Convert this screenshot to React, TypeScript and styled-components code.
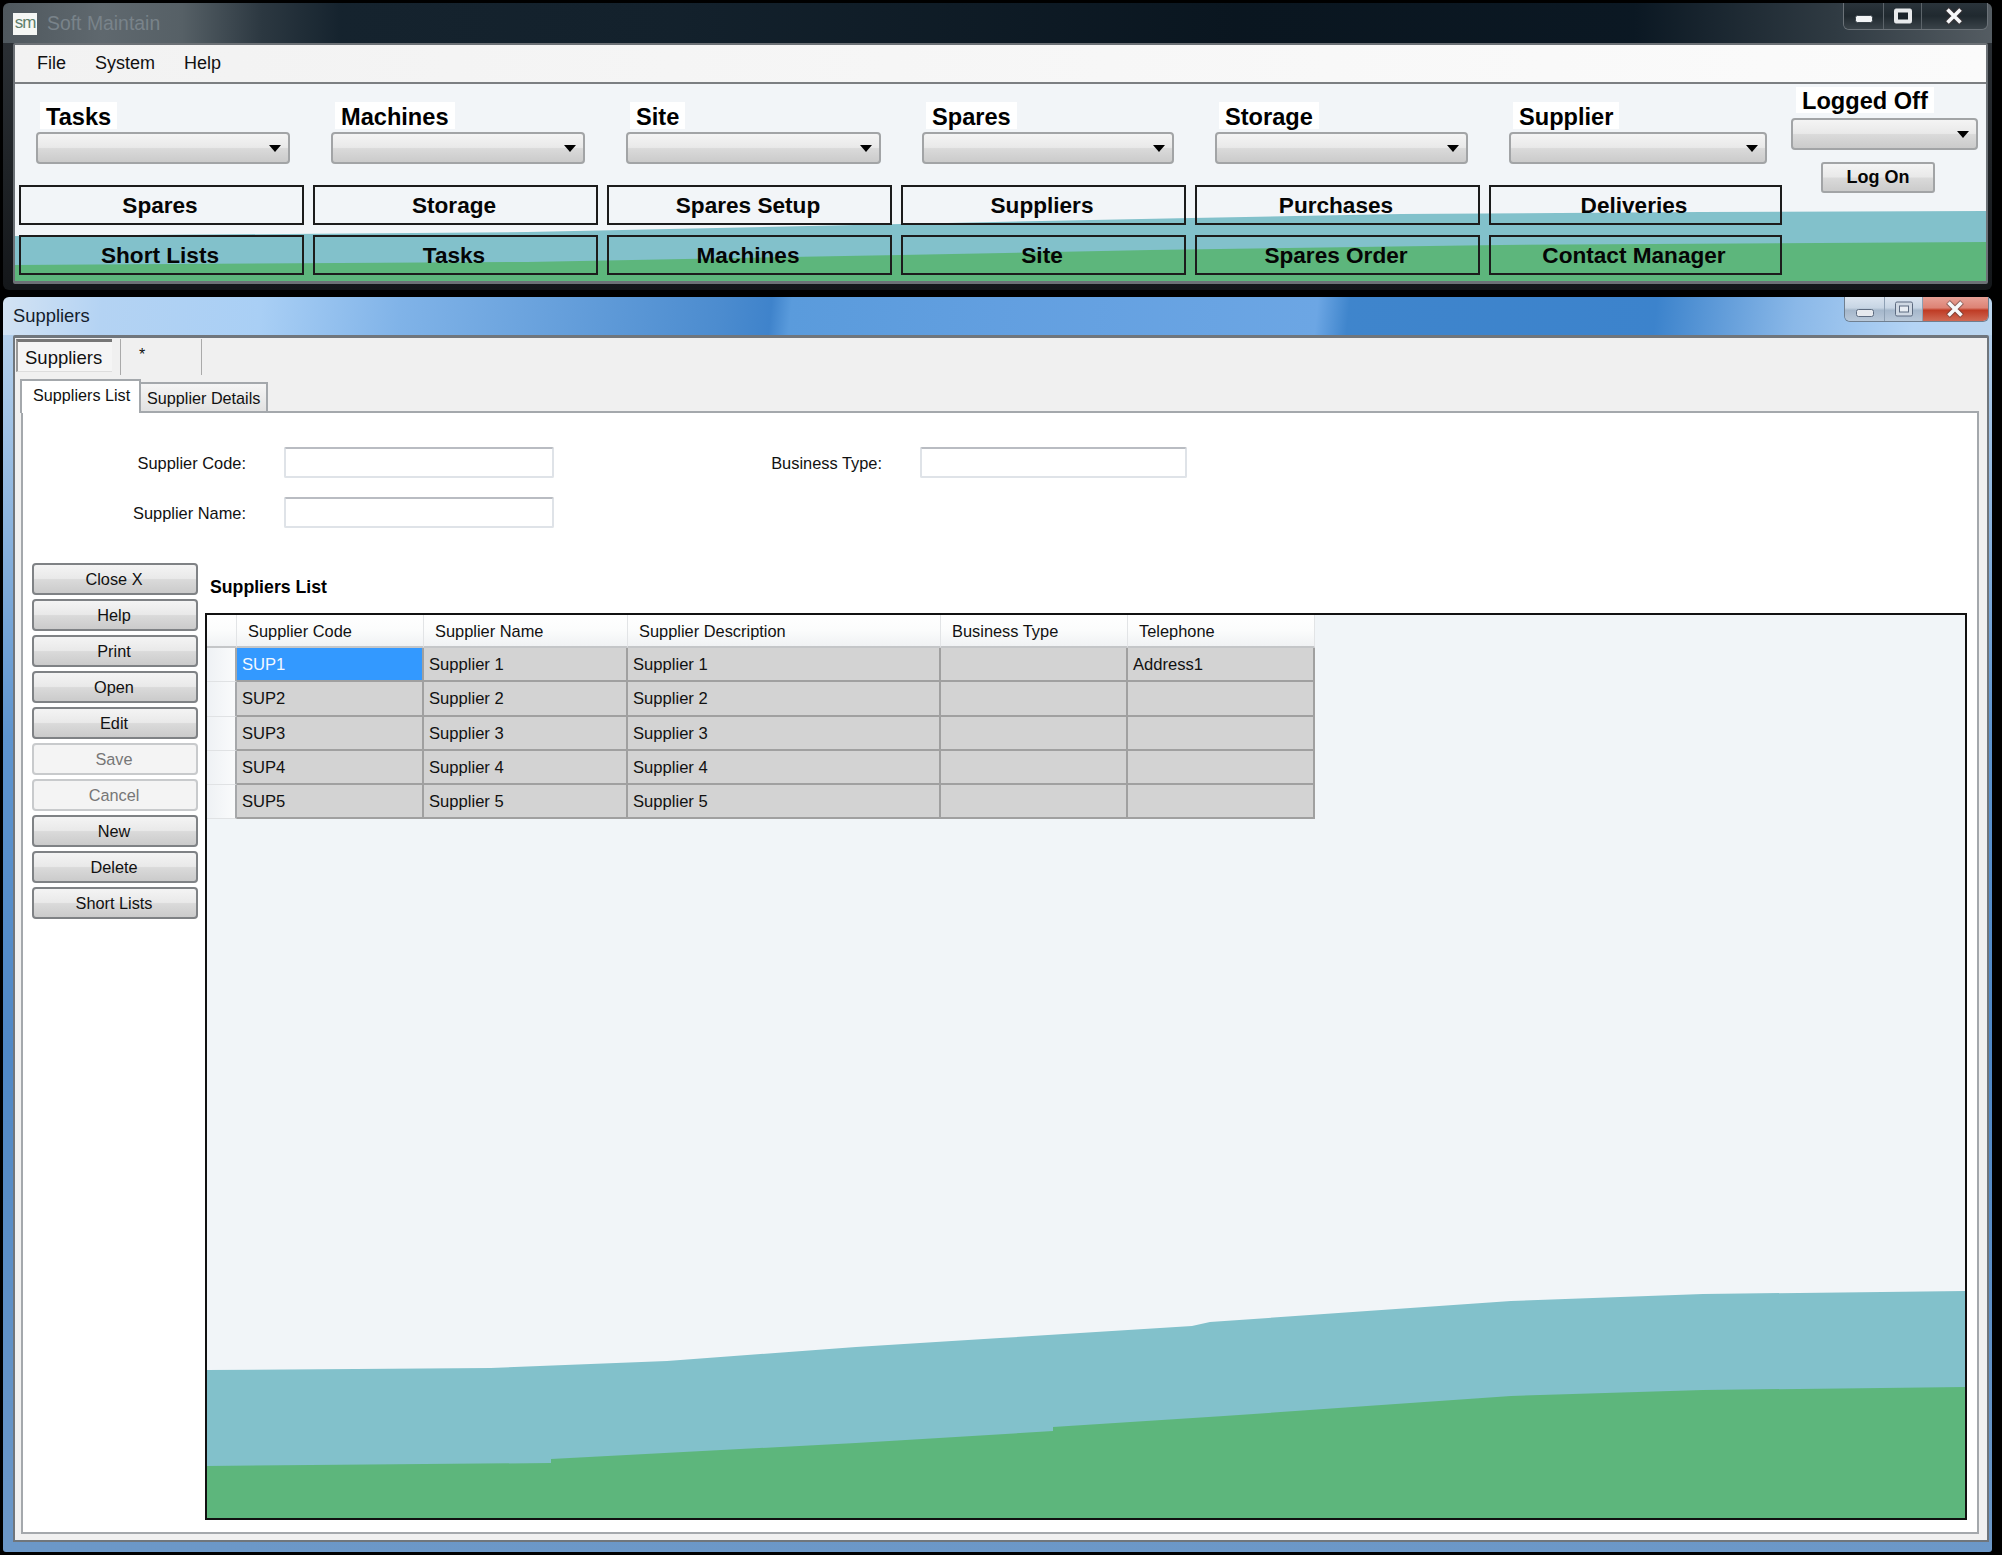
import * as React from 'react';
import styled, { createGlobalStyle } from 'styled-components';

const GlobalStyle = createGlobalStyle`
  html, body {
    margin: 0;
    width: 2002px;
    height: 1555px;
    overflow: hidden;
    background: #000;
    font-family: "Liberation Sans", Arial, sans-serif;
  }
  * { box-sizing: border-box; }
`;

const Desktop = styled.div`
  width: 2002px;
  height: 1555px;
  padding: 3px 0 0 3px;
  display: flex;
  flex-direction: column;
  background: #000;
`;

const DarkFrame = styled.div`
  width: 1989px;
  height: 287px;
  padding: 0 4px 6px 10px;
  border-radius: 6px;
  display: flex;
  flex-direction: column;
  background:
    linear-gradient(180deg, transparent 0 40px, #2a2f34 40px, #14171a 100%),
    linear-gradient(90deg, #4f585e 0, #5f686e 5%, #566066 9%, #2c3841 13%, #15232e 17%, #13212c 34%, #0a1620 62%, #0b1823 82%, #2f3a42 92%, #545c62 100%);
`;

const GlassFrame = styled.div`
  width: 1989px;
  height: 1255px;
  margin-top: 7px;
  padding: 0 3px 10px 10px;
  border-radius: 6px 6px 3px 3px;
  display: flex;
  flex-direction: column;
  background:
    linear-gradient(96deg, #d3e3f3 0, #b4d3f3 5%, #a9cff5 13%, #80b3e8 20%, #4c8ccf 36%, #3f83cb 38.6%, #5a9bdc 39.6%, #629fe0 50%, #6ca6e4 66%, #3f85cc 67.6%, #3c83cc 83%, #8ab8e8 90%, #b4d4f5 96%, #bcd6ee 100%) 0 0 / 100% 38px no-repeat,
    linear-gradient(180deg, #bcd5ee 0, #5d94cf 35%, #4f88c6 60%, #6c98c8 100%);
`;

const TitleBar = styled.div<{ $height: number }>`
  height: ${props => props.$height}px;
  flex: none;
  display: flex;
  justify-content: space-between;
  align-items: flex-start;
`;

const Brand = styled.div`
  display: flex;
  align-items: center;
  gap: 10px;
  padding-top: 9px;
`;

const AppIcon = styled.div`
  width: 24px;
  height: 22px;
  background: #f5f7f5;
  color: #5f7f6c;
  font-size: 17px;
  letter-spacing: -1px;
  line-height: 20px;
  text-align: center;
`;

const DarkTitle = styled.div`
  color: #79838a;
  font-size: 19.4px;
`;

const GlassTitle = styled.div`
  color: #14202c;
  font-size: 18.4px;
  padding-top: 8px;
`;

const WinControls = styled.div<{ $glass?: boolean }>`
  width: 145px;
  height: ${props => (props.$glass ? 25 : 27)}px;
  display: flex;
  border: 1px solid ${props => (props.$glass ? '#6f7f90' : '#6b7278')};
  border-top: none;
  border-radius: 0 0 6px 6px;
  overflow: hidden;
`;

const WinButton = styled.div<{ $w: number; $variant: 'dark' | 'glass' | 'close' }>`
  width: ${props => props.$w}px;
  display: flex;
  align-items: center;
  justify-content: center;
  border-right: 1px solid ${props => (props.$variant === 'dark' ? '#5c646a' : '#8ea0b4')};
  background: ${props =>
    props.$variant === 'close'
      ? 'linear-gradient(180deg, #e8a196 0, #dd8375 45%, #bf3b24 55%, #cf6a55 100%)'
      : props.$variant === 'glass'
        ? 'linear-gradient(180deg, #dbe5f0 0, #c7d5e4 45%, #a5b7cb 55%, #b9c8d9 100%)'
        : 'linear-gradient(180deg, #2a343b 0, #20292f 50%, #3a4349 100%)'};
  &:last-child { border-right: none; }
`;

const Client = styled.div`
  flex: 1;
  min-height: 0;
  display: flex;
  flex-direction: column;
  border: 2px solid #6c7176;
  border-bottom-width: 3px;
  border-radius: 2px;
`;

const MenuBar = styled.div`
  height: 39px;
  flex: none;
  display: flex;
  align-items: center;
  padding-left: 22px;
  background: linear-gradient(90deg, #f2f2f2 0, #fbfbfb 100%);
  border-bottom: 2px solid #7c7f82;
`;

const MenuItem = styled.div<{ $w: number }>`
  width: ${props => props.$w}px;
  color: #111;
  font-size: 18px;
`;

const ControlPanel = styled.div`
  position: relative;
  flex: 1;
  display: flex;
  background: #f2f5f8;
  overflow: hidden;
`;

const WaveArt = styled.svg`
  position: absolute;
  inset: 0;
  width: 100%;
  height: 100%;
`;

const PanelMain = styled.div`
  position: relative;
  width: 1776px;
  padding: 18px 0 0 4px;
`;

const ComboRow = styled.div`
  display: flex;
  gap: 41px;
  margin-left: 17px;
`;

const ComboGroup = styled.div<{ $w: number }>`
  width: ${props => props.$w}px;
`;

const ComboLabel = styled.div`
  display: inline-block;
  height: 27px;
  margin-left: 4px;
  padding: 0 6px;
  background: #fff;
  color: #000;
  font-size: 23.6px;
  font-weight: bold;
  line-height: 30px;
`;

const Combo = styled.div`
  height: 32px;
  margin-top: 3px;
  display: flex;
  align-items: center;
  justify-content: flex-end;
  padding-right: 7px;
  border: 2px solid #a2a4a6;
  border-radius: 4px;
  background: linear-gradient(180deg, #f4f4f4 0, #e9e9e9 48%, #dadada 52%, #cbcbcb 100%);
`;

const ComboArrow = styled.div`
  width: 0;
  height: 0;
  border-left: 6px solid transparent;
  border-right: 6px solid transparent;
  border-top: 7px solid #000;
`;

const NavGrid = styled.div`
  display: grid;
  grid-template-columns: repeat(5, 285px) 293px;
  grid-auto-rows: 40px;
  column-gap: 9px;
  row-gap: 10px;
  margin-top: 21px;
`;

const NavButton = styled.button`
  padding: 1px 3px 0 0;
  border: 2px solid #1c1c1c;
  background: transparent;
  color: #050505;
  font-family: inherit;
  font-size: 22.6px;
  font-weight: bold;
`;

const SessionColumn = styled.div`
  position: relative;
  width: 187px;
  padding-top: 3px;
`;

const SessionLabel = styled(ComboLabel)`
  height: 26px;
  margin-left: 5px;
  line-height: 29px;
`;

const SessionCombo = styled(Combo)`
  margin-top: 5px;
`;

const LogOnButton = styled.button`
  display: block;
  width: 114px;
  height: 31px;
  margin: 12px 0 0 30px;
  padding: 0;
  border: 2px solid #a2a4a6;
  border-radius: 3px;
  background: linear-gradient(180deg, #f4f4f4 0, #e9e9e9 48%, #dadada 52%, #cbcbcb 100%);
  color: #050505;
  font-family: inherit;
  font-size: 18px;
  font-weight: bold;
`;

const DocClient = styled.div`
  flex: 1;
  min-height: 0;
  display: flex;
  flex-direction: column;
  padding: 1px 8px 6px 6px;
  background: #f0f0f0;
  border: 2px solid #70767c;
  border-top-width: 3px;
  border-radius: 2px 2px 0 0;
`;

const OuterTabs = styled.div`
  height: 36px;
  flex: none;
  display: flex;
  margin-left: -5px;
`;

const OuterTab = styled.div`
  width: 96px;
  height: 33px;
  margin-right: 8px;
  padding-left: 7px;
  background: #f5f5f5;
  border-top: 3px solid #777;
  border-left: 2px solid #999;
  border-bottom: 1px solid #ddd;
  color: #111;
  font-size: 18.5px;
  line-height: 31px;
`;

const NewTab = styled.div`
  width: 82px;
  padding: 7px 0 0 18px;
  border-left: 1px solid #aaa;
  border-right: 1px solid #aaa;
  color: #111;
  font-size: 16px;
`;

const InnerTabs = styled.div`
  height: 32px;
  margin-top: 4px;
  flex: none;
  display: flex;
  align-items: flex-end;
`;

const InnerTab = styled.div<{ $active?: boolean }>`
  position: relative;
  width: ${props => (props.$active ? 121 : 127)}px;
  height: ${props => (props.$active ? 34 : 29)}px;
  margin-left: ${props => (props.$active ? -1 : 0)}px;
  margin-bottom: ${props => (props.$active ? -2 : 0)}px;
  padding-left: ${props => (props.$active ? 11 : 6)}px;
  border: 2px solid #a4a8ac;
  border-left-width: ${props => (props.$active ? 2 : 0)}px;
  border-bottom: none;
  background: ${props => (props.$active ? '#fff' : 'linear-gradient(180deg, #f5f5f5 0, #e2e2e2 100%)')};
  color: #111;
  font-size: 16.2px;
  line-height: ${props => (props.$active ? 28 : 29)}px;
`;

const TabPage = styled.div`
  flex: 1;
  min-height: 0;
  display: flex;
  flex-direction: column;
  padding-top: 34px;
  background: #fff;
  border: 2px solid #a4a8ac;
`;

const FilterForm = styled.div`
  flex: none;
  display: grid;
  grid-template-columns: 223px 270px 290px 267px;
  column-gap: 38px;
  row-gap: 19px;
  grid-auto-rows: 31px;
  align-items: center;
`;

const FieldLabel = styled.div`
  padding-top: 1px;
  color: #111;
  font-size: 16.4px;
  text-align: right;
`;

const FieldInput = styled.input`
  height: 31px;
  width: 100%;
  padding: 0;
  background: #fff;
  border: 2px solid #dfe3e8;
  border-top-color: #b9bcc2;
  border-radius: 2px;
`;

const PageBody = styled.div`
  flex: 1;
  min-height: 0;
  display: flex;
  margin: 35px 0 12px 9px;
`;

const ActionColumn = styled.div`
  width: 166px;
  flex: none;
  display: flex;
  flex-direction: column;
  gap: 4px;
`;

const ActionButton = styled.button`
  height: 32px;
  padding: 0 2px 0 0;
  border: 2px solid ${props => (props.disabled ? '#c8cacc' : '#7f8285')};
  border-radius: 4px;
  background: ${props =>
    props.disabled
      ? '#f4f4f4'
      : 'linear-gradient(180deg, #f4f4f4 0, #e9e9e9 48%, #dadada 52%, #cbcbcb 100%)'};
  color: ${props => (props.disabled ? '#777' : '#111')};
  font-family: inherit;
  font-size: 16.3px;
`;

const ListColumn = styled.div`
  width: 1762px;
  margin-left: 7px;
  display: flex;
  flex-direction: column;
`;

const ListTitle = styled.div`
  height: 50px;
  flex: none;
  padding: 14px 0 0 5px;
  color: #000;
  font-size: 17.7px;
  font-weight: bold;
`;

const GridPanel = styled.div`
  position: relative;
  flex: 1;
  min-height: 0;
  border: 2px solid #111;
  background: #f1f5f8;
  overflow: hidden;
`;

const DataGrid = styled.div`
  position: relative;
  display: grid;
  grid-template-columns: 30px 187px 204px 313px 187px 187px;
  grid-template-rows: 33px repeat(5, 34.3px);
  width: 1108px;
`;

const HeaderCell = styled.div`
  padding-left: 11px;
  background: linear-gradient(180deg, #fff 0, #fbfcfc 50%, #f0f2f4 100%);
  border-right: 1px solid #e2e4e6;
  border-bottom: 2px solid #c4c6c8;
  color: #111;
  font-size: 16.4px;
  line-height: 32px;
`;

const RowHeader = styled.div`
  background: linear-gradient(90deg, #eef1f4 0, #fafbfc 100%);
  border-right: 2px solid #a6a8aa;
  border-bottom: 1px solid #e0e2e4;
`;

const Cell = styled.div<{ $selected?: boolean }>`
  padding-left: 5px;
  background: ${props => (props.$selected ? '#3399ff' : '#d3d3d3')};
  border-right: 2px solid #a0a0a0;
  border-bottom: 2px solid #a0a0a0;
  color: ${props => (props.$selected ? '#f2f8ff' : '#111')};
  font-size: 16.6px;
  line-height: 33px;
`;

const ActionLabels = ['Close X', 'Help', 'Print', 'Open', 'Edit', 'Save', 'Cancel', 'New', 'Delete', 'Short Lists'];
const DisabledActions = ['Save', 'Cancel'];

const ComboGroups = [
  { label: 'Tasks', w: 254 },
  { label: 'Machines', w: 254 },
  { label: 'Site', w: 255 },
  { label: 'Spares', w: 252 },
  { label: 'Storage', w: 253 },
  { label: 'Supplier', w: 258 },
];

const NavLabels = [
  'Spares', 'Storage', 'Spares Setup', 'Suppliers', 'Purchases', 'Deliveries',
  'Short Lists', 'Tasks', 'Machines', 'Site', 'Spares Order', 'Contact Manager',
];

const Columns = ['Supplier Code', 'Supplier Name', 'Supplier Description', 'Business Type', 'Telephone'];

const Rows = [1, 2, 3, 4, 5].map(n => [`SUP${n}`, `Supplier ${n}`, `Supplier ${n}`, '', n === 1 ? 'Address1' : '']);

const TEAL = '#82c1cb';
const GREEN = '#5db67c';

const MinimizeIcon = ({ glass }: { glass?: boolean }) => (
  <svg width="22" height="12" viewBox="0 0 22 12" style={{ marginTop: glass ? 8 : 6 }}>
    <rect x="2.5" y="2.5" width="17" height="7" rx="2" fill={glass ? '#e6e9ee' : '#f2f4f5'} stroke={glass ? '#5d6b80' : '#3a434a'} />
  </svg>
);

const RestoreIcon = ({ glass }: { glass?: boolean }) => (
  <svg width="22" height="18" viewBox="0 0 22 18">
    <rect x="2.5" y="2" width="17" height="14" rx="1.5" fill={glass ? '#cfd8e3' : '#e8eaec'} stroke={glass ? '#5d6b80' : '#e8eaec'} />
    <rect x="6.5" y="6" width="9" height="6" fill={glass ? '#e8edf3' : '#1b242b'} stroke={glass ? '#5d6b80' : '#1b242b'} />
  </svg>
);

const CloseIcon = () => (
  <svg width="22" height="18" viewBox="0 0 22 18">
    <path d="M4 2 L18 16 M18 2 L4 16" stroke="#4a3a3a" strokeWidth="5.5" strokeOpacity="0.55" />
    <path d="M4.5 2.5 L17.5 15.5 M17.5 2.5 L4.5 15.5" stroke="#f6f8fa" strokeWidth="3.6" />
  </svg>
);

const Controls = ({ glass }: { glass?: boolean }) => {
  const variant = glass ? 'glass' : 'dark';
  return (
    <WinControls $glass={glass}>
      <WinButton $w={41} $variant={variant}><MinimizeIcon glass={glass} /></WinButton>
      <WinButton $w={38} $variant={variant}><RestoreIcon glass={glass} /></WinButton>
      <WinButton $w={66} $variant={glass ? 'close' : 'dark'}><CloseIcon /></WinButton>
    </WinControls>
  );
};

const App: React.FC = () => {
  return (
    <Desktop>
      <GlobalStyle />
      <DarkFrame>
        <TitleBar $height={40}>
          <Brand>
            <AppIcon>sm</AppIcon>
            <DarkTitle>Soft Maintain</DarkTitle>
          </Brand>
          <Controls />
        </TitleBar>
        <Client>
          <MenuBar>
            <MenuItem $w={58}>File</MenuItem>
            <MenuItem $w={89}>System</MenuItem>
            <MenuItem $w={60}>Help</MenuItem>
          </MenuBar>
          <ControlPanel>
            <WaveArt viewBox="15 84 1970 197" preserveAspectRatio="none">
              <path fill={TEAL} d="M15 236 L527 232 L900 224 L1191 218 L1400 214 L1700 212 L1985 211 L1985 281 L15 281 Z" />
              <path fill={GREEN} d="M15 265 L527 262 L900 255 L1150 250 L1500 245 L1985 242 L1985 281 L15 281 Z" />
            </WaveArt>
            <PanelMain>
              <ComboRow>
                {ComboGroups.map(group => (
                  <ComboGroup key={group.label} $w={group.w}>
                    <ComboLabel>{group.label}</ComboLabel>
                    <Combo><ComboArrow /></Combo>
                  </ComboGroup>
                ))}
              </ComboRow>
              <NavGrid>
                {NavLabels.map((label, index) => (
                  <NavButton key={index}>{label}</NavButton>
                ))}
              </NavGrid>
            </PanelMain>
            <SessionColumn>
              <SessionLabel>Logged Off</SessionLabel>
              <SessionCombo><ComboArrow /></SessionCombo>
              <LogOnButton>Log On</LogOnButton>
            </SessionColumn>
          </ControlPanel>
        </Client>
      </DarkFrame>

      <GlassFrame>
        <TitleBar $height={38}>
          <GlassTitle>Suppliers</GlassTitle>
          <Controls glass />
        </TitleBar>
        <DocClient>
          <OuterTabs>
            <OuterTab>Suppliers</OuterTab>
            <NewTab>*</NewTab>
          </OuterTabs>
          <InnerTabs>
            <InnerTab $active>Suppliers List</InnerTab>
            <InnerTab>Supplier Details</InnerTab>
          </InnerTabs>
          <TabPage>
            <FilterForm>
              <FieldLabel>Supplier Code:</FieldLabel>
              <FieldInput />
              <FieldLabel>Business Type:</FieldLabel>
              <FieldInput />
              <FieldLabel>Supplier Name:</FieldLabel>
              <FieldInput />
            </FilterForm>
            <PageBody>
              <ActionColumn>
                {ActionLabels.map(label => (
                  <ActionButton key={label} disabled={DisabledActions.includes(label)}>
                    {label}
                  </ActionButton>
                ))}
              </ActionColumn>
              <ListColumn>
                <ListTitle>Suppliers List</ListTitle>
                <GridPanel>
                  <WaveArt viewBox="207 615 1758 903" preserveAspectRatio="none">
                    <path fill={TEAL} d="M207 1370 L491 1368 L667 1361 L856 1347 L1000 1338 L1192 1326 L1210 1322 L1511 1301 L1703 1294 L1965 1291 L1965 1518 L207 1518 Z" />
                    <path fill={GREEN} d="M207 1466 L551 1463 L551 1459 L856 1443 L1053 1431 L1053 1427 L1224 1416 L1511 1396 L1703 1390 L1965 1387 L1965 1518 L207 1518 Z" />
                  </WaveArt>
                  <DataGrid>
                    <HeaderCell />
                    {Columns.map(column => (
                      <HeaderCell key={column}>{column}</HeaderCell>
                    ))}
                    {Rows.map((row, rowIndex) => (
                      <React.Fragment key={rowIndex}>
                        <RowHeader />
                        {row.map((value, cellIndex) => (
                          <Cell key={cellIndex} $selected={rowIndex === 0 && cellIndex === 0}>
                            {value}
                          </Cell>
                        ))}
                      </React.Fragment>
                    ))}
                  </DataGrid>
                </GridPanel>
              </ListColumn>
            </PageBody>
          </TabPage>
        </DocClient>
      </GlassFrame>
    </Desktop>
  );
};

export default App;
